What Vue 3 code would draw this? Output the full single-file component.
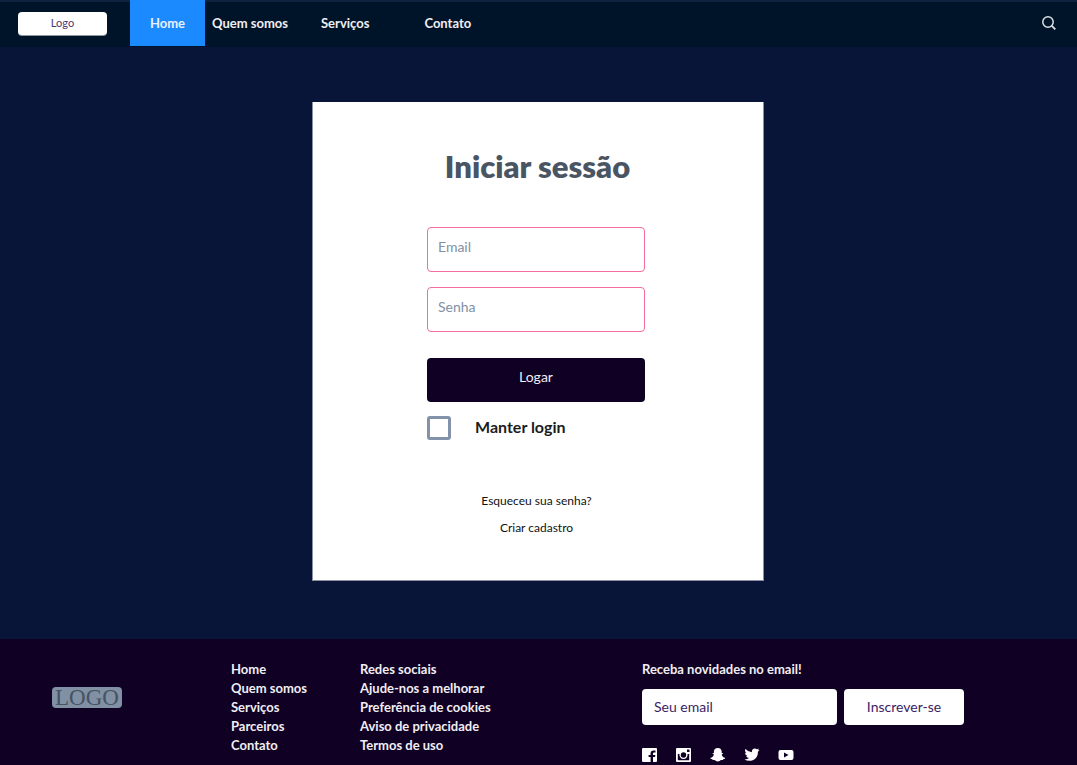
<script setup>
import { ref } from 'vue'

const email = ref('')
const password = ref('')
const keepLogin = ref(false)
const newsletter = ref('')

const siteLinks = ['Home', 'Quem somos', 'Serviços', 'Parceiros', 'Contato']
const helpLinks = [
  'Redes sociais',
  'Ajude-nos a melhorar',
  'Preferência de cookies',
  'Aviso de privacidade',
  'Termos de uso',
]
</script>

<template>
  <div class="page">
    <header class="topbar">
      <a class="brand" href="#">Logo</a>
      <nav class="nav">
        <a class="active" href="#">Home</a>
        <a class="about" href="#">Quem somos</a>
        <a class="services" href="#">Serviços</a>
        <a class="contact" href="#">Contato</a>
      </nav>
      <button class="search" type="button" aria-label="Buscar">
        <svg viewBox="0 0 14 14" width="14" height="14" fill="none" stroke="#dce1e6" stroke-width="1.5">
          <circle cx="6" cy="6" r="5.2" />
          <path d="M9.8 9.8 13.3 13.3" stroke-width="1.8" />
        </svg>
      </button>
    </header>

    <main class="content">
      <section class="card">
        <h1>Iniciar sessão</h1>
        <form class="login" @submit.prevent>
          <input v-model="email" class="field" type="email" placeholder="Email" aria-label="Email" />
          <input v-model="password" class="field" type="password" placeholder="Senha" aria-label="Senha" />
          <button class="submit" type="submit">Logar</button>
          <div class="keep">
            <input id="keep" v-model="keepLogin" type="checkbox" />
            <label for="keep">Manter login</label>
          </div>
        </form>
        <div class="help">
          <a href="#">Esqueceu sua senha?</a>
          <a href="#">Criar cadastro</a>
        </div>
      </section>
    </main>

    <footer class="footer">
      <div class="footer-brand"><a href="#">LOGO</a></div>
      <ul class="links">
        <li v-for="link in siteLinks" :key="link"><a href="#">{{ link }}</a></li>
      </ul>
      <ul class="links">
        <li v-for="link in helpLinks" :key="link"><a href="#">{{ link }}</a></li>
      </ul>
      <div class="news">
        <form @submit.prevent>
          <label for="news">Receba novidades no email!</label>
          <div class="news-row">
            <input id="news" v-model="newsletter" type="email" placeholder="Seu email" />
            <button type="submit">Inscrever-se</button>
          </div>
        </form>
        <div class="social">
          <a href="#" aria-label="Facebook">
            <svg viewBox="0 0 16 14"><path fill-rule="evenodd" d="M0 1Q0 0 1 0H14Q15 0 15 1V13Q15 14 14 14H11V9H13L13.4 7H11V5.5Q11 4.5 12 4.5H13.5V2.5H11.5Q8.6 2.5 8.6 5.2V7H6.6V9H8.6V14H1Q0 14 0 13Z" /></svg>
          </a>
          <a href="#" aria-label="Instagram">
            <svg viewBox="0 0 16 14"><path fill-rule="evenodd" d="M1 0H14Q15 0 15 1V13Q15 14 14 14H1Q0 14 0 13V1Q0 0 1 0ZM11 1.5V4H13.5V1.5ZM1.8 6V12.3H13.2V6H11.5A4.1 4.1 0 1 1 3.5 6ZM7.5 4.3A2.7 2.7 0 1 0 7.5 9.7 2.7 2.7 0 1 0 7.5 4.3Z" /></svg>
          </a>
          <a href="#" aria-label="Snapchat">
            <svg viewBox="0 0 16 14"><path d="M7.8 0C5.3 0 3.9 1.5 3.9 3.6V5.2L2.5 5Q2.1 5.8 3.9 6.6C3.5 8.4 2.2 9.5.3 10.1Q.1 10.9 2.4 11.2L2.7 12.1 4.6 12C5.8 12.5 6.2 13.5 7.8 13.5S9.8 12.5 11 12L12.9 12.1 13.2 11.2Q15.5 10.9 15.3 10.1C13.4 9.5 12.1 8.4 11.7 6.6Q13.5 5.8 13.1 5L11.7 5.2V3.6C11.7 1.5 10.3 0 7.8 0Z" /></svg>
          </a>
          <a href="#" aria-label="Twitter">
            <svg viewBox="0 0 16 14"><path d="M15.5 2Q14.8 3.2 13.9 3.8C14.1 9.3 10.4 12.8 5.3 12.8Q2.6 12.8.4 11.4 3.2 11.6 5.1 10.1 2.9 9.9 2.1 7.9H3.5Q1 7 1 4.7L2.4 5.1Q.2 3.2 1.5.9 4.1 4 8 4.2C7.3 1.2 10.6-.8 12.9 1.3L14.9.5Q14.6 1.6 13.7 2.2Z" /></svg>
          </a>
          <a href="#" aria-label="YouTube">
            <svg viewBox="0 0 16 14"><path fill-rule="evenodd" d="M2 2H13.5Q15.5 2 15.5 4V10Q15.5 12 13.5 12H2.5Q.5 12 .5 10V4Q.5 2 2.5 2ZM6 4.5V9.5L10.5 7Z" /></svg>
          </a>
        </div>
      </div>
    </footer>
  </div>
</template>

<style>
body {
  margin: 0;
}
</style>

<style scoped>
.page {
  display: flex;
  flex-direction: column;
  min-height: 100vh;
  background: #081538;
  color: #f0eef3;
  font: 14px/19px Lato, "Liberation Sans", sans-serif;
}

.page * {
  box-sizing: border-box;
}

a {
  color: inherit;
  text-decoration: none;
}

button,
input {
  font: inherit;
}

.topbar {
  display: flex;
  align-items: stretch;
  height: 47px;
  padding: 0 21px 0 18px;
  background: linear-gradient(#0e233e 2px, #001429 2px);
}

.brand {
  align-self: center;
  width: 89px;
  height: 23px;
  border-radius: 4px;
  background: #fff;
  box-shadow: 0 1px 0 #8f969f;
  color: #4b3a6e;
  font-size: 11px;
  line-height: 22px;
  text-align: center;
}

.nav {
  display: flex;
  flex: 1;
  margin: 0 0 1px 23px;
  font-size: 13px;
  font-weight: 700;
  line-height: 47px;
}

.active {
  width: 75px;
  background: #1c8aff;
  color: #e8f1ff;
  text-align: center;
}

.about {
  margin-left: 7px;
}

.services {
  margin-left: 33px;
}

.contact {
  margin-left: 55px;
}

.search {
  display: flex;
  align-items: center;
  padding: 0 0 2px;
  border: 0;
  background: none;
}

.content {
  display: flex;
  flex: 1;
  align-items: flex-start;
  justify-content: center;
  padding: 55px 26px 58px 24px;
}

.card {
  display: flex;
  flex-direction: column;
  align-items: center;
  width: 452px;
  padding: 44px 24px 43px;
  border: 1px solid #8a8fa3;
  border-top: 0;
  background: #fff;
}

h1 {
  margin: 0;
  color: #4a5564;
  font-size: 31px;
  font-weight: 800;
  line-height: 40px;
}

.login {
  display: flex;
  flex-direction: column;
  width: 218px;
  margin: 41px 3px 0 0;
}

.field {
  height: 45px;
  margin-bottom: 15px;
  padding: 0 10px 6px;
  border: 1px solid #f56a9f;
  border-radius: 4px;
  outline: none;
  background: #fff;
}

.field::placeholder {
  color: #8190a5;
  opacity: 1;
}

.submit {
  height: 44px;
  margin-top: 11px;
  padding: 0 0 7px;
  border: 0;
  border-radius: 4px;
  background: #0f0024;
  color: #f0eef3;
}

.keep {
  display: flex;
  align-items: center;
  gap: 24px;
  margin-top: 14px;
  color: #1c1c1c;
  font-size: 16px;
  font-weight: 700;
}

.keep label {
  padding-bottom: 3px;
}

.keep input {
  width: 24px;
  height: 24px;
  margin: 0;
  appearance: none;
  border: 3px solid #8292a8;
  border-radius: 3px;
  background: #fff;
}

.keep input:checked {
  background: #0f0024;
}

.help {
  display: flex;
  flex-direction: column;
  align-items: center;
  gap: 8px;
  margin: 51px 2px 0 0;
  color: #111;
  font-size: 12px;
}

.footer {
  display: grid;
  grid-template-columns: 179px 129px 282px 1fr;
  padding: 21px 52px 3px;
  background: #0f0024;
}

.footer-brand a {
  display: inline-block;
  margin-top: 27px;
  padding: 0 3px;
  border-radius: 4px;
  background: #8190a5;
  color: #465361;
  font: 23px/21px "Liberation Serif", serif;
}

.links {
  margin: 0;
  padding: 0;
  list-style: none;
  font-size: 13px;
  font-weight: 700;
}

.news label {
  display: block;
  font-size: 13px;
  font-weight: 700;
}

.news-row {
  display: flex;
  gap: 7px;
  margin-top: 10px;
}

.news-row input,
.news-row button {
  height: 36px;
  border: 0;
  border-radius: 4px;
  background: #fff;
  color: #3b1d65;
}

.news-row input {
  width: 195px;
  padding: 0 12px 1px;
}

.news-row input::placeholder {
  color: #3b1d65;
  opacity: 1;
}

.news-row button {
  width: 120px;
  padding: 0 0 1px;
}

.social {
  display: flex;
  gap: 18px;
  margin-top: 23px;
}

.social svg {
  display: block;
  width: 16px;
  height: 14px;
  fill: #fff;
}
</style>
